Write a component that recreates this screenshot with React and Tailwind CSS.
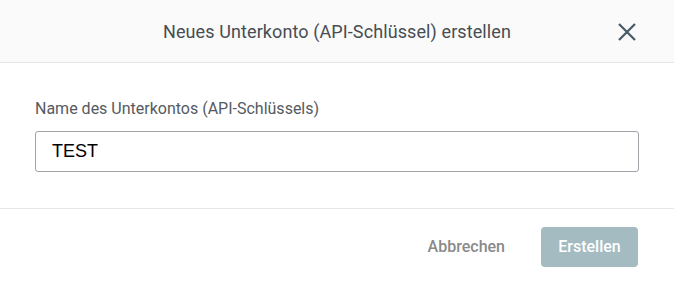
import React from 'react';

export default function App() {
  return (
    <div className="w-[674px] h-[285px] bg-white font-['Roboto',sans-serif] flex flex-col">
      <div className="h-[63px] bg-[#fafafa] border-b border-[#e6e6e6] flex items-center relative">
        <h2 className="flex-1 text-center text-[18px] tracking-[0.1px] text-[#474d53]">
          Neues Unterkonto (API-Schlüssel) erstellen
        </h2>
        <button className="absolute left-[617px] top-[22px] w-[20px] h-[20px] flex items-center justify-center">
          <svg width="20" height="20" viewBox="0 0 20 20" fill="none" stroke="#455a64" strokeWidth="2.2">
            <path d="M2 2 L18 18 M18 2 L2 18" />
          </svg>
        </button>
      </div>
      <div className="h-[146px] border-b border-[#e6e6e6] px-[35px] pt-[35px]">
        <label className="block text-[16px] text-[#555a5f] leading-[22px]">
          Name des Unterkontos (API-Schlüssels)
        </label>
        <div className="mt-[11px] h-[41px] w-[604px] border border-[#a0a4a8] rounded-[3px] flex items-center px-[16px]">
          <span className="font-['Liberation_Sans',Arial,sans-serif] text-[18px] text-black">TEST</span>
        </div>
      </div>
      <div className="flex-1 flex items-start justify-end pr-[36px] pt-[18px] gap-[36px]">
        <button className="h-[40px] text-[16px] font-medium text-[#8a8a8a]">Abbrechen</button>
        <button className="h-[40px] w-[97px] rounded-[4px] bg-[#a3bbc1] text-[16px] font-medium text-white">
          Erstellen
        </button>
      </div>
    </div>
  );
}
